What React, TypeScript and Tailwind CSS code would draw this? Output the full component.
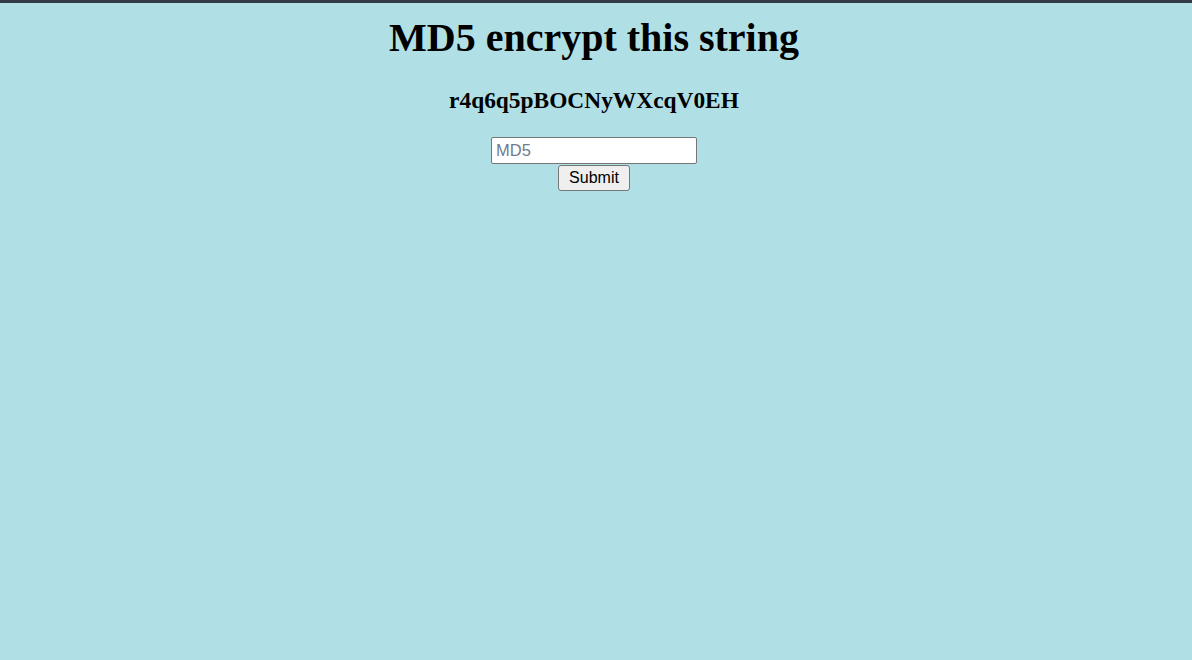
export default function App() {
  return (
    <div className="min-h-[660px] bg-[#b0e0e6] font-['Liberation_Serif',serif] text-black">
      <div className="h-[3px] bg-[#343946]" />
      <div className="flex flex-col items-center pr-1">
        <h1 className="mt-[12px] text-[40px] font-bold leading-[46px]">MD5 encrypt this string</h1>
        <h2 className="mt-[25px] text-[23.4px] font-bold leading-[28px]">r4q6q5pBOCNyWXcqV0EH</h2>
        <form className="mt-[23px] flex flex-col items-center" onSubmit={(e) => e.preventDefault()}>
          <input
            type="text"
            placeholder="MD5"
            className="h-[27px] w-[206px] rounded-[2px] border border-[#767676] bg-white px-[4px] font-['Liberation_Sans',sans-serif] text-[16.5px] text-black outline-none placeholder:text-[#6f7b8c]"
          />
          <button
            type="submit"
            className="mt-px h-[26px] w-[72px] rounded-[3px] border border-[#767676] bg-[#efefef] font-['Liberation_Sans',sans-serif] text-[16px] leading-none"
          >
            Submit
          </button>
        </form>
      </div>
    </div>
  );
}
